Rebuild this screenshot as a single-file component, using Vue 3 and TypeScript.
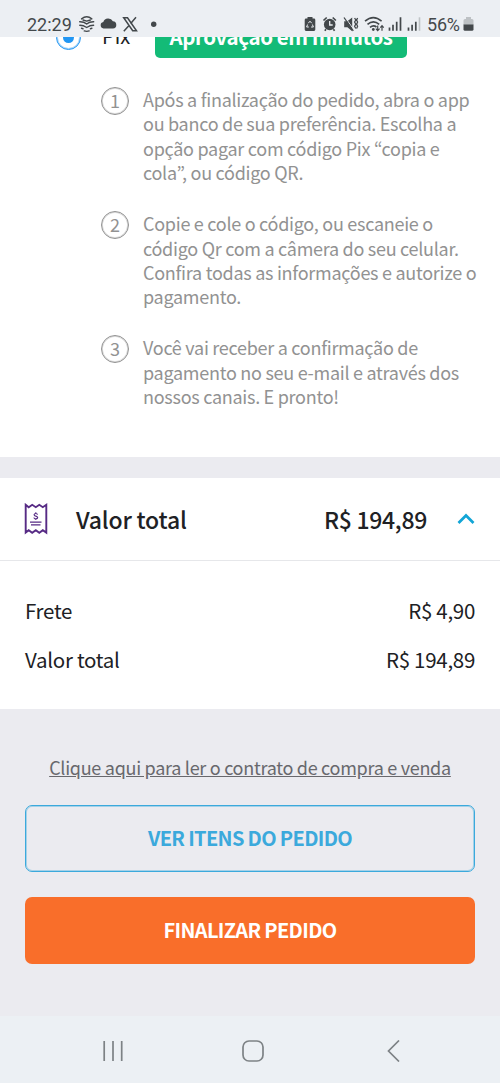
<script setup lang="ts">
interface Step {
  id: number
  lines: string[]
}

interface SummaryRow {
  label: string
  value: string
}

const steps: Step[] = [
  {
    id: 1,
    lines: [
      'Após a finalização do pedido, abra o app',
      'ou banco de sua preferência. Escolha a',
      'opção pagar com código Pix “copia e',
      'cola”, ou código QR.',
    ],
  },
  {
    id: 2,
    lines: [
      'Copie e cole o código, ou escaneie o',
      'código Qr com a câmera do seu celular.',
      'Confira todas as informações e autorize o',
      'pagamento.',
    ],
  },
  {
    id: 3,
    lines: [
      'Você vai receber a confirmação de',
      'pagamento no seu e-mail e através dos',
      'nossos canais. E pronto!',
    ],
  },
]

const rows: SummaryRow[] = [
  { label: 'Frete', value: 'R$ 4,90' },
  { label: 'Valor total', value: 'R$ 194,89' },
]
</script>

<template>
  <div class="screen">
    <header class="status">
      <span class="clock">22:29</span>
      <svg class="left-icons" width="84" height="20" viewBox="78 14 84 20" fill="none">
        <g stroke="#43484b" stroke-width="1.4" stroke-linecap="round" stroke-linejoin="round">
          <path d="M81.600 18.900Q86.700 14.600 91.800 18.900" />
          <path d="M83 20L86.700 21.200L90.400 20" />
          <path d="M79.700 21.800Q84 21.700 86.700 24Q89.400 21.700 93.700 21.800" />
          <path d="M79.800 25.300L83.600 25.800L86.700 27.500L89.800 25.800L93.600 25.300" />
          <path d="M81.500 28.300L83 28.700M84.200 30.900Q86.700 31.800 89.200 30.900M90.400 28.700L91.900 28.300" />
        </g>
        <path d="M103.500 28.500a3.300 3.300 0 0 1-.2-6.500 5.200 5.200 0 0 1 9.600-.7 3.700 3.700 0 0 1 3.400 3.700 3.500 3.500 0 0 1-3.300 3.500z" fill="#43484b" />
        <path d="M123.700 17.800h3.800l9 13h-3.800z" stroke="#43484b" stroke-width="1.500" />
        <path d="M136 17.300l-5.300 6.100M128.800 25.700l-5 5.500" stroke="#43484b" stroke-width="1.500" />
        <circle cx="153.700" cy="24.200" r="2.700" fill="#43484b" />
      </svg>
      <svg class="right-icons" width="120" height="20" viewBox="302 14 120 20" fill="none">
        <path d="M307.500 17h5v1.600h1.500a1.300 1.300 0 0 1 1.300 1.300v9.700a1.300 1.300 0 0 1-1.300 1.300h-8a1.300 1.300 0 0 1-1.300-1.300v-9.700a1.300 1.300 0 0 1 1.300-1.300h1.500z" fill="#43484b" />
        <path d="M308.300 23.200l1.700-2 1.700 2M312.400 24.500l1 2.500h-2.300M308.800 27h-2.200l1-2.500" stroke="#eceff3" stroke-width="1" />
        <circle cx="329.700" cy="24.500" r="5.800" fill="#43484b" />
        <path d="M323.500 20.500l3.200-3M332.700 17.500l3.200 3M326 29.300l-1.200 1.500M333.400 29.300l1.200 1.500" stroke="#43484b" stroke-width="1.700" />
        <path d="M329.700 21v4h3" stroke="#eceff3" stroke-width="1.300" />
        <path d="M344.200 21.200h3.200l4.800-3.700v13.700l-4.800-4h-3.200z" fill="#43484b" />
        <path d="M344.900 17l9.500 13.500" stroke="#eceff3" stroke-width="1" />
        <path d="M344 17.500l9.300 13.300M354.600 18l1.200 2-1.200 2 1.200 2.200-1.200 2 1.200 2.300M357.600 18l-1 2 1 2-1 2.200 1 2-1 2.300" stroke="#43484b" stroke-width="1.300" />
        <path d="M365 21.200q8.300-7.200 16.600 0M367.500 24.400q5.900-5 11.700 0M370 27.400q3.400-2.800 6.500-.4" stroke="#43484b" stroke-width="1.600" />
        <circle cx="373.300" cy="29.500" r="1.400" fill="#43484b" />
        <path d="M377.700 25.500v4.800m-1.900-1.700l1.900 2 1.900-2M382 30.800V26m-1.700 1.700l1.700-2 1.700 2" stroke="#43484b" stroke-width="1.200" />
        <path d="M389.500 30.800v-3.300M393 30.800v-6M396.700 30.800v-9M400.500 30.800V17.300" stroke="#43484b" stroke-width="1.700" />
        <path d="M408.500 30.800v-3.300M412.100 30.800v-6M415.800 30.800v-9" stroke="#43484b" stroke-width="1.700" />
        <path d="M419.500 30.800V17.300" stroke="#bfc3c6" stroke-width="1.600" />
      </svg>
      <span class="percent">56%</span>
      <svg class="battery" width="11" height="16" viewBox="0 0 11 16">
        <path d="M3 1h5v2h1q1.500 0 1.500 1.500V9H.5V4.500Q.5 3 2 3h1z" fill="#bdc1c4" />
        <path d="M.5 8.500h10v4.800q0 1.500-1.500 1.500H2q-1.500 0-1.500-1.500z" fill="#43484b" />
      </svg>
    </header>

    <main class="content">
      <section class="payment">
        <div class="option">
          <span class="radio"><span class="dot"></span></span>
          <span class="method">Pix</span>
          <span class="badge">Aprovação em minutos</span>
        </div>
        <ol class="steps">
          <li v-for="step in steps" :key="step.id" class="step">
            <span class="number">{{ step.id }}</span>
            <p class="copy">
              <span v-for="line in step.lines" :key="line" class="line">{{ line }}</span>
            </p>
          </li>
        </ol>
      </section>

      <section class="summary">
        <div class="total">
          <svg class="receipt" width="24" height="32" viewBox="0 0 24 32" fill="none">
            <path d="M1.700 1.800L4.700 4.200L8.200 1.800L11.800 4.200L15.300 1.800L18.800 4.200L22.300 1.800V29.600L18.800 27.200L15.300 29.800L11.800 27.200L8.200 29.800L4.700 27.200L1.700 29.600Z" stroke="#572b85" stroke-width="1.900" />
            <path d="M6 19.200h11.500M7 21.900h9.500" stroke="#572b85" stroke-width="1.300" />
            <path d="M13.600 11.700q-.3-1.200-1.800-1.200t-1.700 1.200q0 1 1.700 1.400t1.900 1.500q-.1 1.300-1.900 1.300t-1.900-1.400M11.800 9.300v1.200M11.800 15.900v1.200" stroke="#572b85" stroke-width="1.100" />
          </svg>
          <h2 class="total-label">Valor total</h2>
          <strong class="total-value">R$ 194,89</strong>
          <svg class="chevron" width="18" height="12" viewBox="0 0 18 12" fill="none">
            <path d="M1.500 10L9 2.500L16.500 10" stroke="#12a5d6" stroke-width="2.700" />
          </svg>
        </div>
        <dl class="rows">
          <div v-for="row in rows" :key="row.label" class="row">
            <dt>{{ row.label }}</dt>
            <dd>{{ row.value }}</dd>
          </div>
        </dl>
      </section>

      <section class="actions">
        <a class="contract">Clique aqui para ler o contrato de compra e venda</a>
        <button class="button outline" type="button">VER ITENS DO PEDIDO</button>
        <button class="button primary" type="button">FINALIZAR PEDIDO</button>
      </section>
    </main>

    <nav class="system">
      <svg width="22" height="22" viewBox="0 0 22 22" fill="none">
        <path d="M2.200 1v20M11 1v20M19.700 1v20" stroke="#7d8285" stroke-width="1.700" />
      </svg>
      <svg class="home" width="22" height="22" viewBox="0 0 22 22" fill="none">
        <rect x="1" y="1" width="20" height="20" rx="6" stroke="#7d8285" stroke-width="1.700" />
      </svg>
      <svg class="back" width="13" height="22" viewBox="0 0 13 22" fill="none">
        <path d="M12 .5L1.500 11L12 21.500" stroke="#7d8285" stroke-width="1.700" />
      </svg>
    </nav>
  </div>
</template>

<style>
body {
  margin: 0;
}
</style>

<style scoped>
.screen {
  width: 500px;
  height: 1083px;
  display: flex;
  flex-direction: column;
  overflow: hidden;
  background: #ebebf0;
  color: #202124;
  font-family: "Noto Sans CJK KR", "Noto Sans", sans-serif;
}
.status {
  position: relative;
  z-index: 1;
  box-sizing: border-box;
  flex: 0 0 37px;
  display: flex;
  align-items: flex-start;
  padding: 14px 26px 0 27px;
  background: #eceff3;
  color: #43484b;
  font-family: Roboto, sans-serif;
  font-size: 18px;
  line-height: 21px;
}
.clock {
  width: 51px;
}
.right-icons {
  margin-left: 140px;
}
.percent {
  width: 35px;
  margin-left: 5px;
  letter-spacing: -0.2px;
}
.battery {
  margin-top: 2px;
  margin-left: 1px;
}
.content {
  flex: 1;
  min-height: 0;
}
.payment {
  box-sizing: border-box;
  display: flow-root;
  height: 420px;
  background: #fff;
}
.option {
  display: flex;
  align-items: center;
  height: 42px;
  margin-top: -21px;
  padding-left: 56px;
}
.radio {
  box-sizing: border-box;
  display: grid;
  place-items: center;
  width: 25px;
  height: 25px;
  border: 1px solid #2196f3;
  border-radius: 50%;
  box-shadow: inset 0 0 0 1px rgba(33, 150, 243, 0.4);
}
.dot {
  width: 11px;
  height: 11px;
  border-radius: 50%;
  background: #2196f3;
}
.method {
  width: 53px;
  margin-left: 21px;
  padding-bottom: 3px;
  font-size: 20px;
  line-height: 24px;
}
.badge {
  box-sizing: border-box;
  width: 252px;
  height: 42px;
  border-radius: 5px;
  background: #13bb77;
  color: #fff;
  font-size: 20.500px;
  font-weight: 700;
  letter-spacing: -0.400px;
  line-height: 40px;
  text-align: center;
  white-space: nowrap;
}
.steps {
  margin: 0;
  padding: 29px 0 0 101px;
  list-style: none;
}
.step {
  display: flex;
  gap: 14px;
  margin-bottom: 26.500px;
  color: #929292;
}
.number {
  box-sizing: border-box;
  flex: 0 0 28px;
  height: 28px;
  border: 1px solid #929292;
  border-radius: 50%;
  box-shadow: inset 0 0 0 1px rgba(146, 146, 146, 0.35);
  font-size: 18px;
  line-height: 25px;
  text-align: center;
}
.copy {
  margin: 0;
  font-size: 18px;
  letter-spacing: -0.275px;
  line-height: 24.400px;
  white-space: nowrap;
}
.line {
  display: block;
}
.summary {
  margin-top: 21px;
  background: #fff;
}
.total {
  box-sizing: border-box;
  display: flex;
  align-items: center;
  height: 83px;
  padding: 0 25px 0 24px;
  border-bottom: 1px solid #e6e7ea;
  font-size: 23px;
  letter-spacing: -0.200px;
  line-height: 30px;
}
.total-label {
  flex: 1;
  margin: 0 0 0 28px;
  font-size: inherit;
  font-weight: 500;
}
.total-value {
  font-weight: 500;
  letter-spacing: -0.300px;
}
.chevron {
  margin-left: 30px;
}
.rows {
  box-sizing: border-box;
  height: 148px;
  margin: 0;
  padding: 25px 25px 0;
  font-size: 20.500px;
  letter-spacing: -0.280px;
  line-height: 48.500px;
}
.row {
  display: flex;
  justify-content: space-between;
}
dd {
  margin: 0;
}
.actions {
  display: flex;
  flex-direction: column;
  padding: 46px 25px 0;
}
.contract {
  align-self: center;
  color: #68686d;
  font-size: 18px;
  letter-spacing: -0.285px;
  line-height: 24px;
  text-decoration: underline;
  white-space: nowrap;
}
.button {
  box-sizing: border-box;
  height: 67px;
  padding: 0 0 2px;
  border-radius: 7px;
  font-family: inherit;
  font-size: 20px;
  font-weight: 700;
  letter-spacing: -0.660px;
  line-height: 30px;
}
.outline {
  margin-top: 26px;
  border: 1px solid #3ba9dc;
  box-shadow: inset 0 0 0 1px rgba(59, 169, 220, 0.4);
  background: transparent;
  color: #3ba9dc;
}
.primary {
  margin-top: 25px;
  border: 0;
  background: #f96e2a;
  color: #fff;
}
.system {
  box-sizing: border-box;
  flex: 0 0 67px;
  display: flex;
  align-items: center;
  padding: 3px 100px 0 102px;
  background: #ecf0f4;
}
.home {
  margin-left: 118px;
}
.back {
  margin-left: 123px;
}
</style>
